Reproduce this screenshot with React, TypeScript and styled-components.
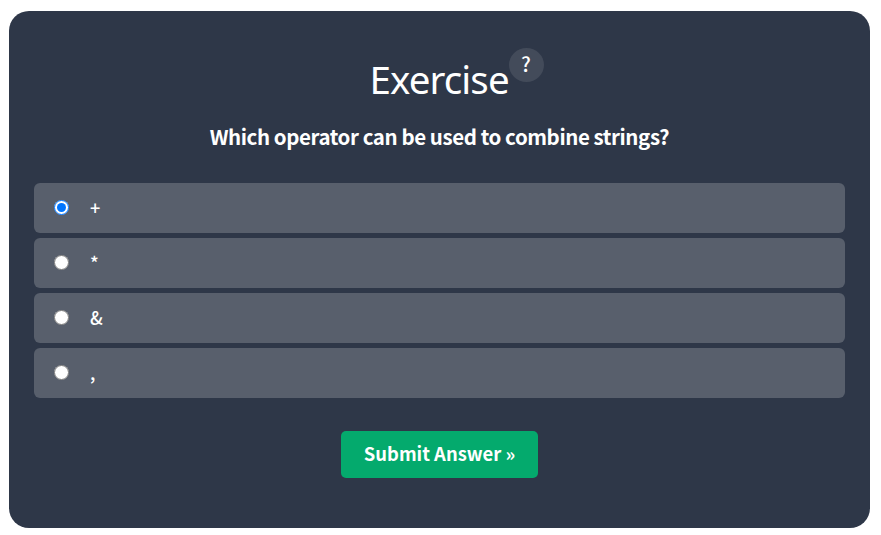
import React, { useState } from "react";
import styled, { createGlobalStyle } from "styled-components";

const GlobalStyle = createGlobalStyle`
  * { box-sizing: border-box; }
  body {
    margin: 0;
    background: #fff;
    font-family: "Source Sans Pro", "Noto Sans CJK SC", sans-serif;
  }
`;

const Card = styled.form`
  width: 861px;
  height: 517px;
  margin: 11px 0 0 9px;
  padding: 37px 25px 0;
  border-radius: 20px;
  background: #2e3748;
  color: #fff;
  display: flex;
  flex-direction: column;
  align-items: center;
`;

const Header = styled.header`
  height: 60px;
  display: flex;
  align-items: flex-start;
  justify-content: center;
  padding-left: 35px;
`;

const Title = styled.h2`
  margin: 3px 0 0 -1px;
  width: 139px;
  font: 400 38.5px/56px "Segoe UI", "Noto Sans", sans-serif;
  letter-spacing: -0.9px;
  white-space: nowrap;
`;

const HelpBadge = styled.span`
  width: 35px;
  height: 34px;
  border-radius: 50%;
  background: #434b5a;
  font-size: 20px;
  line-height: 32px;
  font-weight: 500;
  text-align: center;
`;

const Question = styled.p`
  margin: 13px 0 0;
  height: 62px;
  font-size: 20.5px;
  line-height: 30px;
  font-weight: 700;
  letter-spacing: -0.43px;
  white-space: nowrap;
`;

const Options = styled.div`
  width: 100%;
  display: grid;
  grid-auto-rows: 50px;
  gap: 5px;
`;

const Option = styled.label`
  display: flex;
  align-items: center;
  gap: 21px;
  padding-left: 20px;
  border-radius: 6px;
  background: #585f6c;
  font-size: 18px;
  font-weight: 500;
  cursor: pointer;
`;

const Radio = styled.input`
  width: 15px;
  height: 15px;
  margin: 0 0 2px;
`;

const AnswerText = styled.span`
  line-height: 48px;
  padding-bottom: 2px;
`;

const SubmitButton = styled.button`
  width: 197px;
  height: 47px;
  margin-top: 33px;
  padding: 0 0 2px;
  border: 0;
  border-radius: 5px;
  background: #04aa6d;
  color: #fff;
  font-family: inherit;
  font-size: 18.4px;
  line-height: 45px;
  font-weight: 700;
  white-space: nowrap;
`;

const answers = ["+", "*", "&", ","];

export default function App() {
  const [selected, setSelected] = useState("+");
  return (
    <>
      <GlobalStyle />
      <Card onSubmit={(event) => event.preventDefault()}>
        <Header>
          <Title>Exercise</Title>
          <HelpBadge>?</HelpBadge>
        </Header>
        <Question>Which operator can be used to combine strings?</Question>
        <Options>
          {answers.map((answer) => (
            <Option key={answer}>
              <Radio
                type="radio"
                name="answer"
                checked={selected === answer}
                onChange={() => setSelected(answer)}
              />
              <AnswerText>{answer}</AnswerText>
            </Option>
          ))}
        </Options>
        <SubmitButton>Submit Answer »</SubmitButton>
      </Card>
    </>
  );
}
